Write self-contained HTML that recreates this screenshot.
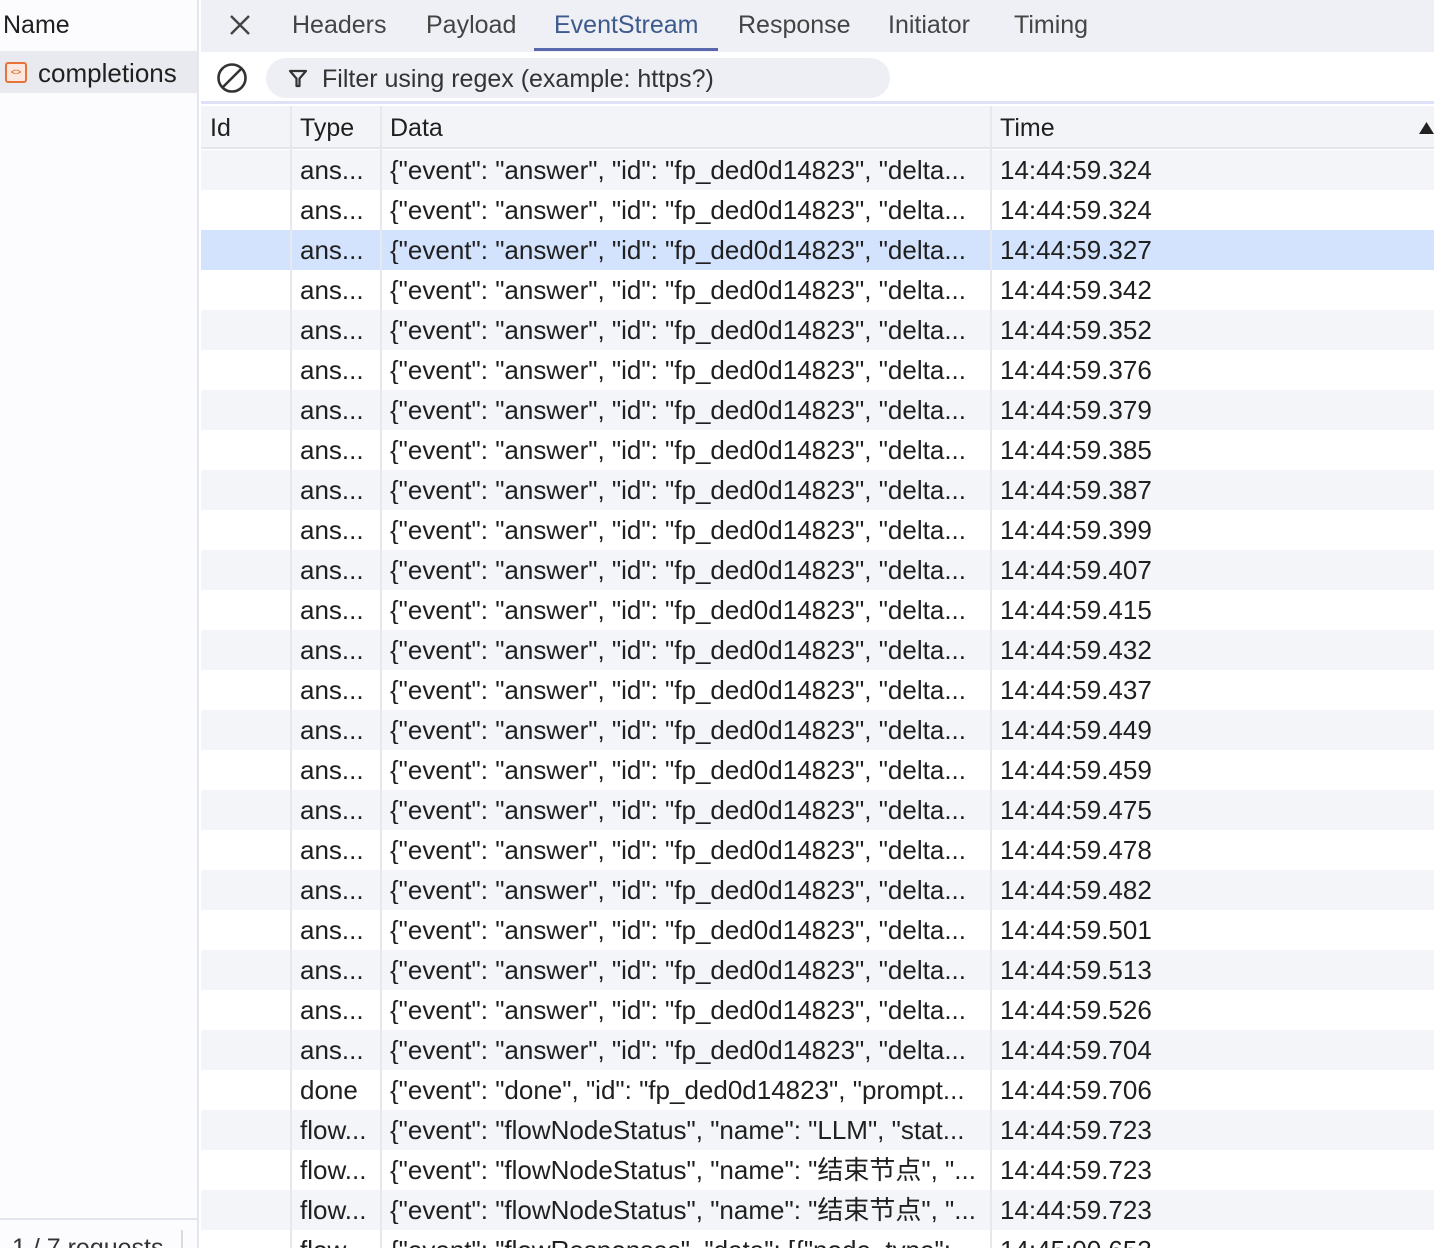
<!DOCTYPE html>
<html><head><meta charset="utf-8"><style>
*{margin:0;padding:0;box-sizing:border-box}
html,body{width:1434px;height:1248px;overflow:hidden}
body{background:#fff;font-family:"Liberation Sans","Noto Sans CJK SC",sans-serif;font-size:25px;line-height:28px;color:#1f1f1f;position:relative}
.abs{position:absolute;white-space:nowrap}
#side{left:0;top:0;width:199px;height:1248px;background:#fcfcfe;border-right:2px solid #e3e6ef}
#tabs{left:201px;top:0;width:1233px;height:52px;background:#eef0f6}
.tab{position:absolute;top:11px;color:#444;}
#filterrow{left:201px;top:52px;width:1233px;height:52px;background:#fff;border-bottom:3px solid #dfe2f6}
.row{position:absolute;left:201px;width:1233px;height:40px;font-size:26px}
.row span{position:absolute;top:6px;white-space:nowrap;overflow:hidden;line-height:28px}
.g{background:#f4f5f8}
.sel{background:#d3e3fd}
.vl{position:absolute;top:106px;width:2px;height:1142px;background:#e6e8ee}
</style></head><body>
<div id="side" class="abs">
  <div class="abs" style="left:3px;top:11px">Name</div>
  <div class="abs" style="left:0;top:51px;width:197px;height:42px;background:#e9eaef"></div>
  <div class="abs" style="left:5px;top:62px;width:22px;height:21px;border:2px solid #e8733a;border-radius:3px;background:#fbe9df;font-size:9px;color:#e8733a;text-align:center;line-height:17px;font-weight:bold">&lt;&gt;</div>
  <div class="abs" style="left:38px;top:59px;font-size:26px">completions</div>
  <div class="abs" style="left:0;top:1218px;width:197px;height:2px;background:#e3e6ef"></div>
  <div class="abs" style="left:181px;top:1230px;width:2px;height:18px;background:#d8dbe2"></div>
  <div class="abs" style="left:12px;top:1234px;color:#333">1 / 7 requests</div>
</div>
<div id="tabs" class="abs">
  <svg class="abs" style="left:28px;top:14px" width="22" height="22" viewBox="0 0 22 22"><path d="M2 2L20 20M20 2L2 20" stroke="#444" stroke-width="2.4"/></svg>
  <div class="tab" style="left:91px">Headers</div>
  <div class="tab" style="left:225px">Payload</div>
  <div class="tab" style="left:353px;color:#3c5a8c">EventStream</div>
  <div class="abs" style="left:333px;top:48px;width:184px;height:3px;background:#5967ad"></div>
  <div class="tab" style="left:537px">Response</div>
  <div class="tab" style="left:687px">Initiator</div>
  <div class="tab" style="left:813px">Timing</div>
</div>
<div id="filterrow" class="abs">
  <svg class="abs" style="left:15px;top:10px" width="32" height="32" viewBox="0 0 32 32"><circle cx="16" cy="16" r="13.5" fill="none" stroke="#333" stroke-width="2.6"/><path d="M7 25L25 7" stroke="#333" stroke-width="2.6"/></svg>
  <div class="abs" style="left:65px;top:6px;width:624px;height:40px;border-radius:20px;background:#edeff5"></div>
  <svg class="abs" style="left:87px;top:16px" width="20" height="20" viewBox="0 0 20 20"><path d="M2 3H18L11.5 10.5V18H8.5V10.5Z" fill="none" stroke="#333" stroke-width="2.2" stroke-linejoin="round"/></svg>
  <div class="abs" style="left:121px;top:13px;color:#333">Filter using regex (example: https?)</div>
</div>
<div class="row" style="top:106px;height:43px;background:#f3f4f8;border-bottom:2px solid #e3e5eb;font-size:25px">
  <span style="left:9px;top:8px">Id</span><span style="left:99px;top:8px">Type</span><span style="left:189px;top:8px">Data</span><span style="left:799px;top:8px">Time</span>
  <svg class="abs" style="left:1218px;top:16px" width="15" height="12" viewBox="0 0 15 12"><path d="M7.5 0L15 12H0Z" fill="#222"/></svg>
</div>
<div id="rows"></div>
<div class="vl" style="left:290px"></div>
<div class="vl" style="left:380px"></div>
<div class="vl" style="left:990px"></div>
<script>
var A='{"event": "answer", "id": "fp_ded0d14823", "delta...';
var F='{"event": "flowNodeStatus", "name": "结束节点", "...';
var d=[
["ans...",A,"14:44:59.324"],["ans...",A,"14:44:59.324"],["ans...",A,"14:44:59.327"],["ans...",A,"14:44:59.342"],
["ans...",A,"14:44:59.352"],["ans...",A,"14:44:59.376"],["ans...",A,"14:44:59.379"],["ans...",A,"14:44:59.385"],
["ans...",A,"14:44:59.387"],["ans...",A,"14:44:59.399"],["ans...",A,"14:44:59.407"],["ans...",A,"14:44:59.415"],
["ans...",A,"14:44:59.432"],["ans...",A,"14:44:59.437"],["ans...",A,"14:44:59.449"],["ans...",A,"14:44:59.459"],
["ans...",A,"14:44:59.475"],["ans...",A,"14:44:59.478"],["ans...",A,"14:44:59.482"],["ans...",A,"14:44:59.501"],
["ans...",A,"14:44:59.513"],["ans...",A,"14:44:59.526"],["ans...",A,"14:44:59.704"],
["done",'{"event": "done", "id": "fp_ded0d14823", "prompt...',"14:44:59.706"],
["flow...",'{"event": "flowNodeStatus", "name": "LLM", "stat...',"14:44:59.723"],
["flow...",F,"14:44:59.723"],["flow...",F,"14:44:59.723"],
["flow...",'{"event": "flowResponses", "data": [{"node_type":...',"14:45:00.653"]];
var h='';
d.forEach(function(r,i){
 var c=i==2?'sel':(i%2==0?'g':'');
 h+='<div class="row '+c+'" style="top:'+(150+40*i)+'px"><span style="left:99px">'+r[0]+'</span><span style="left:189px;width:600px">'+r[1].replace(/</g,'&lt;')+'</span><span style="left:799px">'+r[2]+'</span></div>';
});
document.getElementById('rows').innerHTML=h;
</script>
</body></html>
